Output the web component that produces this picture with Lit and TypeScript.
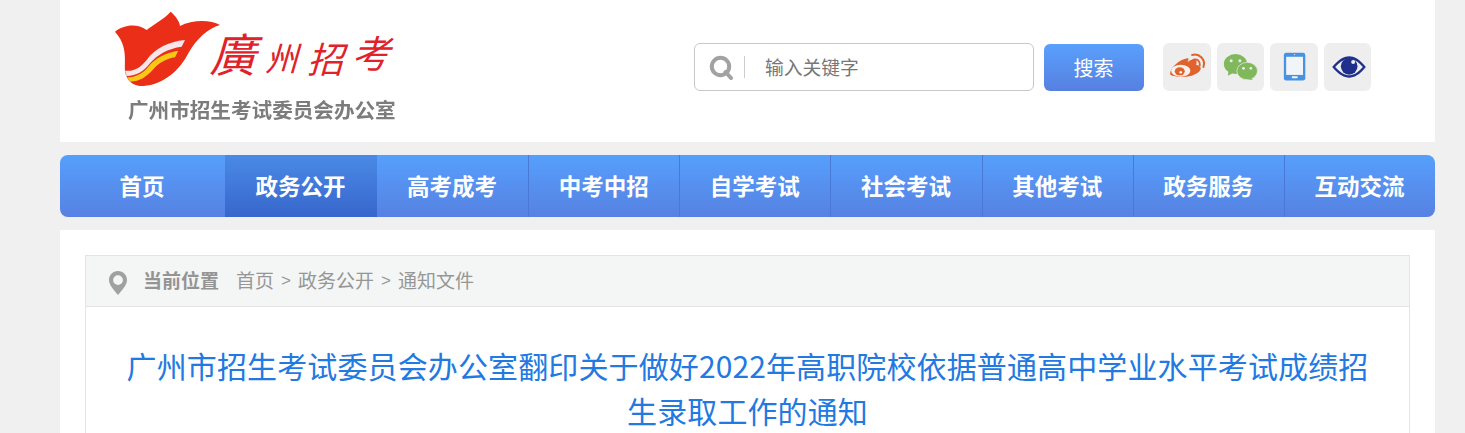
import { LitElement, html, css } from "lit";
import { customElement } from "lit/decorators.js";

const NAV = ["首页", "政务公开", "高考成考", "中考中招", "自学考试", "社会考试", "其他考试", "政务服务", "互动交流"];

@customElement("app-root")
export class AppRoot extends LitElement {
  static styles = css`
    :host {
      display: block;
      height: 433px;
      overflow: hidden;
      background: #f0f0f0;
      font-family: "Noto Sans CJK SC", "Liberation Sans", sans-serif;
    }
    .wrap { width: 1375px; margin-left: 60px; display: flex; flex-direction: column; }
    .header {
      height: 142px;
      background: #fff;
      display: flex;
      align-items: flex-start;
    }
    .logo { width: 634px; flex: none; padding: 12px 0 0 53px; box-sizing: border-box; }
    .logo-top { display: flex; align-items: flex-start; height: 79px; }
    .logo-top svg { flex: none; width: 110px; height: 76px; }
    .brand {
      font-family: "Noto Sans CJK TC", "Noto Sans CJK SC", sans-serif;
      color: #e0222a;
      display: flex;
      align-items: center;
      height: 64px;
      margin: 8px 0 0 -8px;
      line-height: 1;
      white-space: nowrap;
      transform: skewX(-16deg);
    }
    .c1 { font-size: 46px; }
    .c2 { font-size: 33px; margin: 10px 0 0 9px; }
    .c3 { font-size: 36px; margin: 10px 0 0 10px; }
    .c4 { font-size: 38px; margin: 0 0 0 7px; }
    .org {
      margin: 3px 0 0 15px;
      font-size: 20.6px;
      line-height: 30px;
      font-weight: 700;
      color: #7c7c7c;
      white-space: nowrap;
      filter: blur(0.4px);
    }
    .tools { display: flex; align-items: flex-start; padding-top: 43px; }
    .search {
      width: 340px;
      height: 48px;
      box-sizing: border-box;
      border: 1px solid #c8c8c8;
      border-radius: 6px;
      display: flex;
      align-items: center;
      padding-left: 15px;
      background: #fff;
    }
    .search svg { width: 25px; height: 25px; flex: none; margin-left: -1px; }
    .divider { width: 1px; height: 22px; background: #ccc; margin-left: 10px; }
    .placeholder { margin-left: 20px; font-size: 18.8px; color: #777; line-height: 26px; }
    .btn {
      margin: 1px 0 0 10px;
      width: 100px;
      height: 47px;
      border-radius: 6px;
      background: linear-gradient(#5aa0fd, #5680e0);
      color: #fff;
      font-size: 20px;
      display: flex;
      align-items: center;
      justify-content: center;
      padding-right: 1px;
      box-sizing: border-box;
    }
    .icons { display: flex; gap: 6px; margin-left: 19px; }
    .ico {
      width: 47.5px;
      height: 48px;
      border-radius: 6px;
      background: #eee;
      display: flex;
    }
    .ico svg { width: 47.5px; height: 48px; display: block; }
    .nav {
      margin-top: 13px;
      height: 62px;
      border-radius: 8px;
      overflow: hidden;
      display: grid;
      grid-template-columns: 165px 152px repeat(7, 1fr);
      background: linear-gradient(#569ffc, #5781e2);
    }
    .nav div {
      display: flex;
      align-items: center;
      justify-content: center;
      color: #fff;
      font-size: 22.5px;
      font-weight: 700;
      border-left: 1px solid #4a78d6;
      box-sizing: border-box;
      padding: 0 1px 2px 0;
    }
    .nav div.first { border-left: 0; }
    .nav div.active { background: linear-gradient(#4a8ae6, #3866cc); border-left: 0; }
    .nav div.after { border-left: 0; }
    .main {
      margin-top: 13px;
      height: 203px;
      background: #fff;
      padding: 25px 25px 0;
      box-sizing: border-box;
    }
    .panel { border: 1px solid #e4e4e4; border-bottom: 0; height: 300px; }
    .crumb {
      height: 51px;
      box-sizing: border-box;
      background: #f4f6f5;
      border-bottom: 1px solid #e4e4e4;
      display: flex;
      align-items: center;
      padding: 0 0 0 22px;
      font-size: 19px;
      color: #8a8a8a;
    }
    .crumb svg { width: 20px; height: 25px; flex: none; margin-top: 3px; }
    .crumb b { margin: 0 0 4px 15px; color: #949494; font-weight: 700; }
    .path { margin: 0 0 4px 17px; display: flex; align-items: center; gap: 7px; color: #969696; }
    .sep { font-family: "Liberation Sans", sans-serif; font-size: 17px; padding-top: 3px; }
    h1 {
      margin: 36px 30px 0;
      font-size: 30px;
      line-height: 45px;
      font-weight: 400;
      letter-spacing: 0.12px;
      color: #2279e2;
      text-align: center;
    }
  `;

  render() {
    return html`
      <div class="wrap">
        <div class="header">
          <div class="logo">
            <div class="logo-top">
              <svg viewBox="39 36 330 228">
                <path fill="#ea2e17" d="M45 95 C70 75 110 68 140 90 C160 75 195 55 212 35 C222 45 238 60 240 78 C275 60 330 58 360 75 C325 85 290 115 265 160 C240 210 190 255 130 258 C100 258 82 245 75 215 C72 180 85 140 45 95 Z" />
                <path fill="#f6e6ea" d="M255 120 C205 125 165 145 140 180 C120 205 100 215 75 212 L80 228 C110 228 130 215 150 190 C170 165 205 145 245 140 Z" />
                <path fill="#f8c914" d="M235 152 C195 158 165 175 145 200 C130 220 105 232 82 232 L90 245 C120 245 140 230 160 208 C175 190 200 175 225 172 Z" />
              </svg>
              <div class="brand"><span class="c1">廣</span><span class="c2">州</span><span class="c3">招</span><span class="c4">考</span></div>
            </div>
            <div class="org">广州市招生考试委员会办公室</div>
          </div>
          <div class="tools">
            <div class="search">
              <svg viewBox="0 0 25 25">
                <circle cx="11.5" cy="11.5" r="8.7" fill="none" stroke="#a2a2a2" stroke-width="4" />
                <path d="M16.5 17 L22 23" stroke="#a2a2a2" stroke-width="4" stroke-linecap="round" />
              </svg>
              <span class="divider"></span>
              <span class="placeholder">输入关键字</span>
            </div>
            <div class="btn">搜索</div>
            <div class="icons">
              <div class="ico">
                <svg viewBox="399 24 142 144">
                  <path fill="#e0622c" d="M472 70 C448 74 420 98 420 117 C420 122 440 126 458 126 C485 126 512 114 512 100 C512 94 505 91 498 89 C503 78 497 71 486 74 C480 75 476 78 472 82 C476 74 477 69 472 70 Z" />
                  <ellipse cx="452" cy="107" rx="29" ry="18" fill="#f7f2ee" />
                  <ellipse cx="449" cy="109" rx="15" ry="12" fill="#e0622c" />
                  <circle cx="452" cy="112" r="4" fill="#f7f2ee" />
                  <path d="M490 74 C502 71 511 79 509 91 M486 60 C508 54 528 74 520 96" fill="none" stroke="#e0622c" stroke-width="6" stroke-linecap="round" />
                </svg>
              </div>
              <div class="ico">
                <svg viewBox="559.5 24 142.5 144">
                  <ellipse cx="615" cy="87" rx="35" ry="30" fill="#82b85c" />
                  <path d="M594 108 L592 122 L612 112 Z" fill="#82b85c" />
                  <circle cx="602" cy="77" r="4.5" fill="#eee" />
                  <circle cx="628" cy="77" r="4.5" fill="#eee" />
                  <ellipse cx="650" cy="108" rx="31" ry="26" fill="#82b85c" stroke="#eee" stroke-width="2" />
                  <path d="M660 128 L668 135 L650 132 Z" fill="#82b85c" />
                  <circle cx="639" cy="100" r="4" fill="#eee" />
                  <circle cx="661" cy="100" r="4" fill="#eee" />
                </svg>
              </div>
              <div class="ico">
                <svg viewBox="720 24 144 144">
                  <rect x="762" y="53" width="65" height="84" rx="7" fill="#4792e2" />
                  <rect x="769" y="65" width="51" height="55" fill="#f2f5f8" />
                  <rect x="786" y="124" width="18" height="6" rx="2" fill="#f2f5f8" />
                  <rect x="793" y="57" width="3" height="3" fill="#f2f5f8" />
                </svg>
              </div>
              <div class="ico">
                <svg viewBox="880.5 24 142.5 144">
                  <path fill-rule="evenodd" fill="#1f2f8c" d="M905 96 C925 72 942 64 956 64 C970 64 987 72 1006 96 C987 120 970 128 956 128 C942 128 925 120 905 96 Z M914 96 C930 114 944 121 956 121 C968 121 982 114 997 96 C982 78 968 71 956 71 C944 71 930 78 914 96 Z" />
                  <circle cx="956" cy="94" r="25" fill="#1f2f8c" />
                  <circle cx="968" cy="81" r="6" fill="#eee" />
                </svg>
              </div>
            </div>
          </div>
        </div>
        <div class="nav">
          ${NAV.map((n, i) => html`<div class="${i === 0 ? "first" : i === 1 ? "active" : i === 2 ? "after" : ""}">${n}</div>`)}
        </div>
        <div class="main">
          <div class="panel">
            <div class="crumb">
              <svg viewBox="0 0 20 25">
                <path fill-rule="evenodd" fill="#a0a0a0" d="M10 1 C4.8 1 1 5 1 10 C1 15 6 20 10 25 C14 20 19 15 19 10 C19 5 15.2 1 10 1 Z M10 5.2 A4.9 4.9 0 1 1 10 15 A4.9 4.9 0 1 1 10 5.2 Z" />
              </svg>
              <b>当前位置</b>
              <span class="path"><span>首页</span><span class="sep">&gt;</span><span>政务公开</span><span class="sep">&gt;</span><span>通知文件</span></span>
            </div>
            <h1>广州市招生考试委员会办公室翻印关于做好2022年高职院校依据普通高中学业水平考试成绩招生录取工作的通知</h1>
          </div>
        </div>
      </div>
    `;
  }
}
